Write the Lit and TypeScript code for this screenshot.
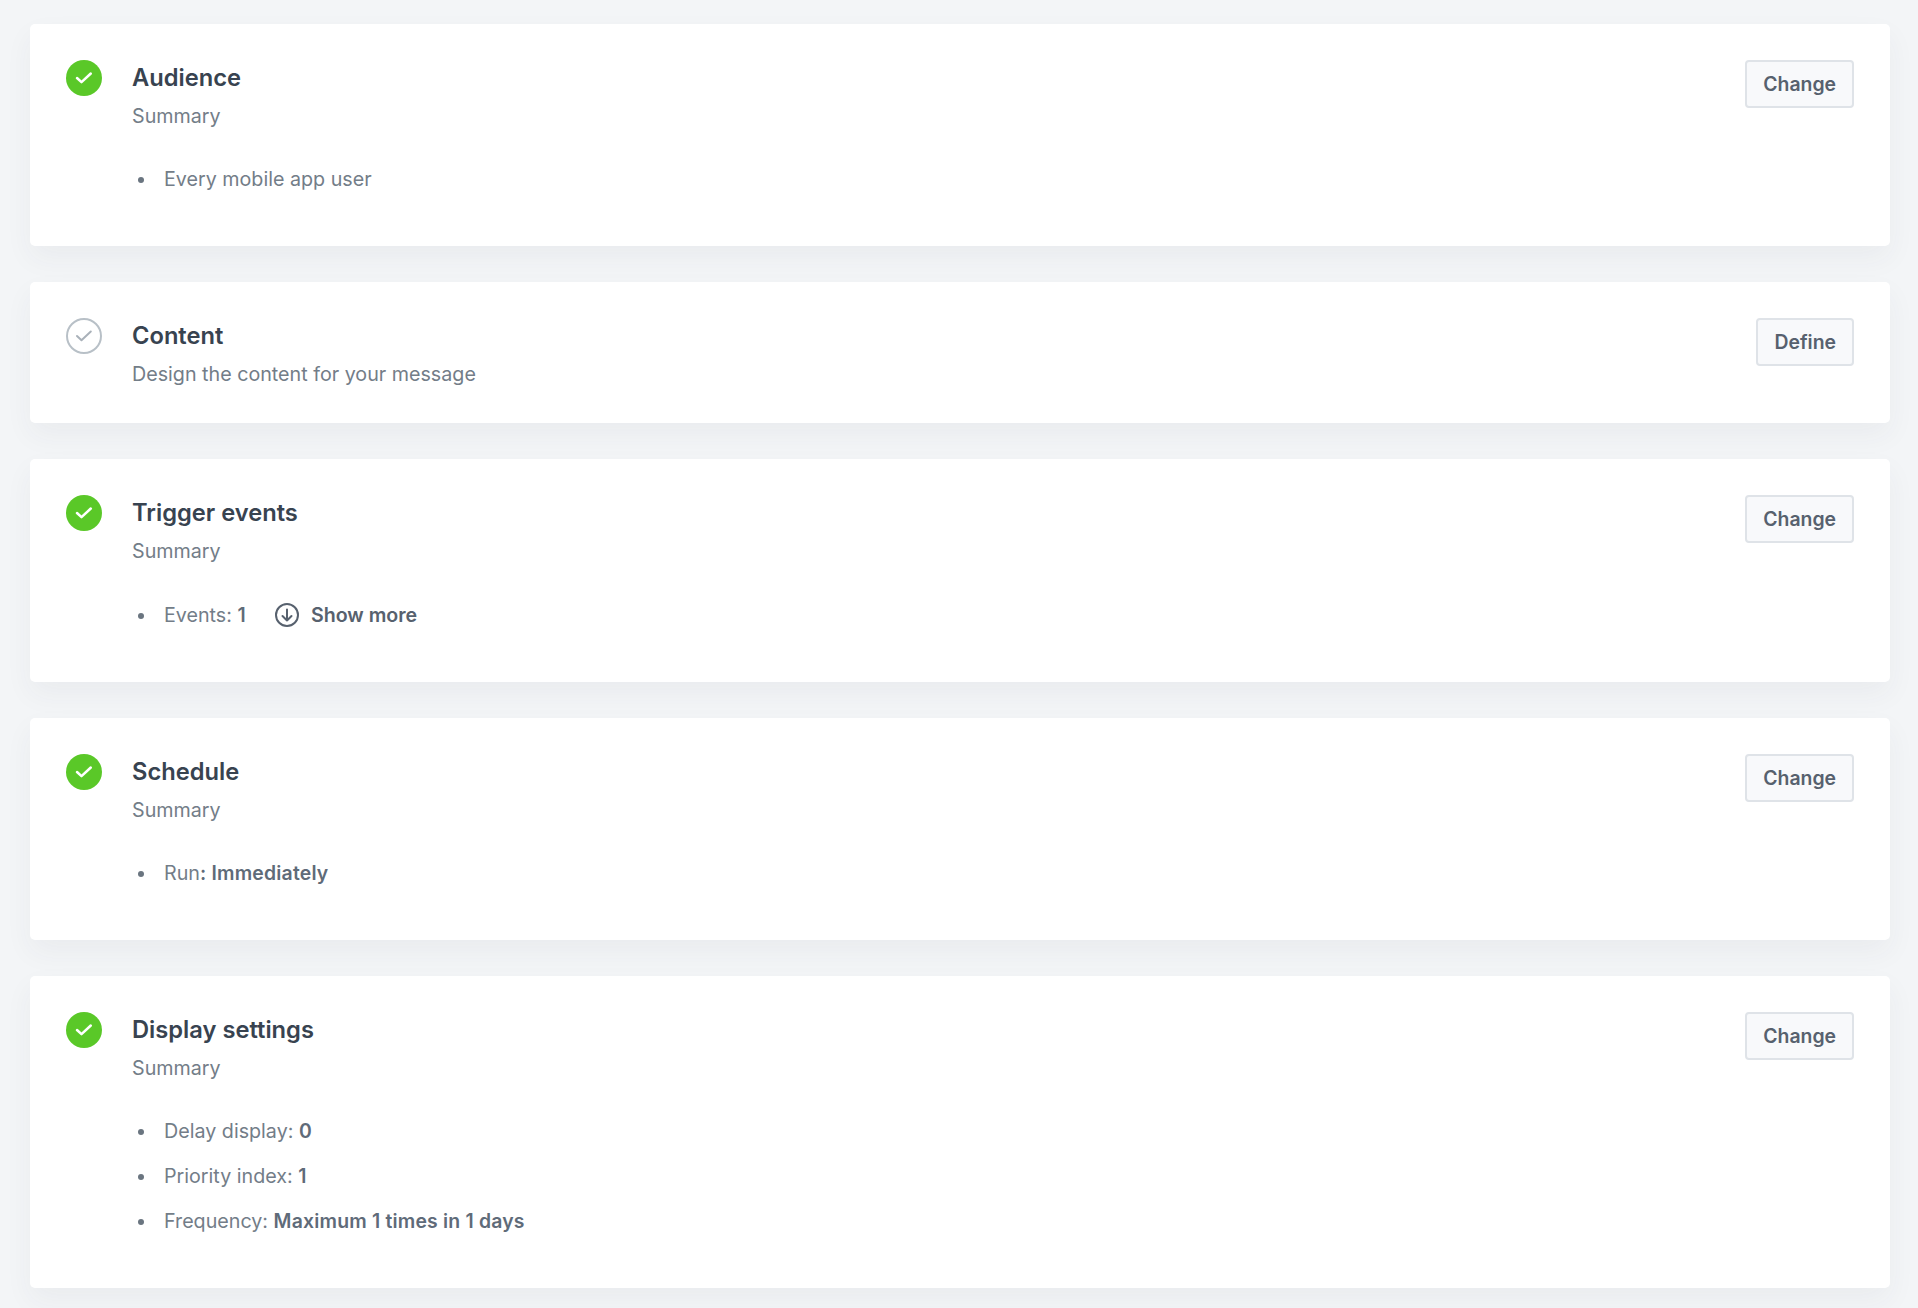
import { LitElement, html, css } from "lit";
import { customElement } from "lit/decorators.js";

type Item = { label: string; value?: string; more?: boolean };
type Card = { title: string; sub: string; done: boolean; btn: string; items: Item[] };

const CARDS: Card[] = [
  { title: "Audience", sub: "Summary", done: true, btn: "Change", items: [{ label: "Every mobile app user" }] },
  { title: "Content", sub: "Design the content for your message", done: false, btn: "Define", items: [] },
  { title: "Trigger events", sub: "Summary", done: true, btn: "Change", items: [{ label: "Events: ", value: "1", more: true }] },
  { title: "Schedule", sub: "Summary", done: true, btn: "Change", items: [{ label: "Run", value: ": Immediately" }] },
  {
    title: "Display settings", sub: "Summary", done: true, btn: "Change",
    items: [
      { label: "Delay display: ", value: "0" },
      { label: "Priority index: ", value: "1" },
      { label: "Frequency: ", value: "Maximum 1 times in 1 days" },
    ],
  },
];

@customElement("app-root")
export class AppRoot extends LitElement {
  static styles = css`
    :host {
      display: block;
      min-height: 1308px;
      box-sizing: border-box;
      background: #f3f5f7;
      padding: 24px 28px 21px 30px;
      font-family: Inter, "Noto Sans", sans-serif;
      -webkit-font-smoothing: antialiased;
    }
    .stack { display: flex; flex-direction: column; gap: 36px; }
    .card {
      display: flex;
      align-items: flex-start;
      background: #fff;
      border-radius: 5px;
      box-shadow: 0 12px 28px rgba(56, 67, 80, 0.05);
      padding: 36px 36px 34.5px;
    }
    .icon { flex: none; width: 36px; height: 36px; margin-right: 30px; display: block; }
    .body { flex: 1; min-width: 0; }
    .title {
      font-size: 23.7px; line-height: 36px; font-weight: 600; color: #384350;
      margin: 0;
    }
    .sub {
      font-size: 19.7px; line-height: 30px; color: #737d88; margin-top: 4.5px;
    }
    ul { list-style: none; margin: 33px 0 0; padding: 0 0 18px 32px; display: flex; flex-direction: column; gap: 15px; }
    li { position: relative; font-size: 19.7px; line-height: 30px; color: #737d88; display: flex; align-items: center; white-space: pre; }
    li.has-more { padding-top: 1px; }
    li::before {
      content: ""; position: absolute; left: -26px; top: 13px;
      width: 6px; height: 6px; border-radius: 50%; background: #6a7580;
    }
    li.has-more::before { top: 14px; }
    b { font-weight: 600; font-size: 19.4px; color: #5f6b79; letter-spacing: 0.2px; }
    .more { display: inline-flex; align-items: center; margin-left: 28px; font-size: 19.6px; font-weight: 600; color: #57616e; }
    .more svg { width: 26px; height: 26px; margin-right: 11px; }
    .btn {
      flex: none; box-sizing: border-box; height: 48px; width: auto; padding: 0 16px;
      border: 2px solid #dfe3e8; border-radius: 4px; background: #f8f9fb;
      color: #57616e; font: 600 19.4px/44px Inter, "Noto Sans", sans-serif; cursor: pointer;
    }
  `;

  private check(done: boolean) {
    return done
      ? html`<svg class="icon" viewBox="0 0 36 36"><circle cx="18" cy="18" r="18" fill="#5ac828"/><path d="M11 18l4.5 4.2L24.8 13.5" fill="none" stroke="#fff" stroke-width="2.5" stroke-linecap="round" stroke-linejoin="round"/></svg>`
      : html`<svg class="icon" viewBox="0 0 36 36"><circle cx="18" cy="18" r="17" fill="none" stroke="#b8c0c7" stroke-width="2"/><path d="M11 18l4.5 4.2L24.8 13.5" fill="none" stroke="#a9b1b9" stroke-width="2" stroke-linecap="round" stroke-linejoin="round"/></svg>`;
  }

  render() {
    return html`<div class="stack">
      ${CARDS.map(
        (c) => html`<section class="card">
          ${this.check(c.done)}
          <div class="body">
            <h2 class="title">${c.title}</h2>
            <div class="sub">${c.sub}</div>
            ${c.items.length
              ? html`<ul>
                  ${c.items.map(
                    (i) => html`<li class=${i.more ? "has-more" : ""}><span>${i.label}${i.value ? html`<b>${i.value}</b>` : ""}</span>${i.more
                      ? html`<span class="more"><svg viewBox="0 0 26 26" fill="none" stroke="#57616e" stroke-width="2" stroke-linecap="round" stroke-linejoin="round"><circle cx="13" cy="13" r="11"/><path d="M13 7.5v11M8.5 14l4.5 4.5 4.5-4.5"/></svg>Show more</span>`
                      : ""}</li>`
                  )}
                </ul>`
              : ""}
          </div>
          <button class="btn">${c.btn}</button>
        </section>`
      )}
    </div>`;
  }
}
